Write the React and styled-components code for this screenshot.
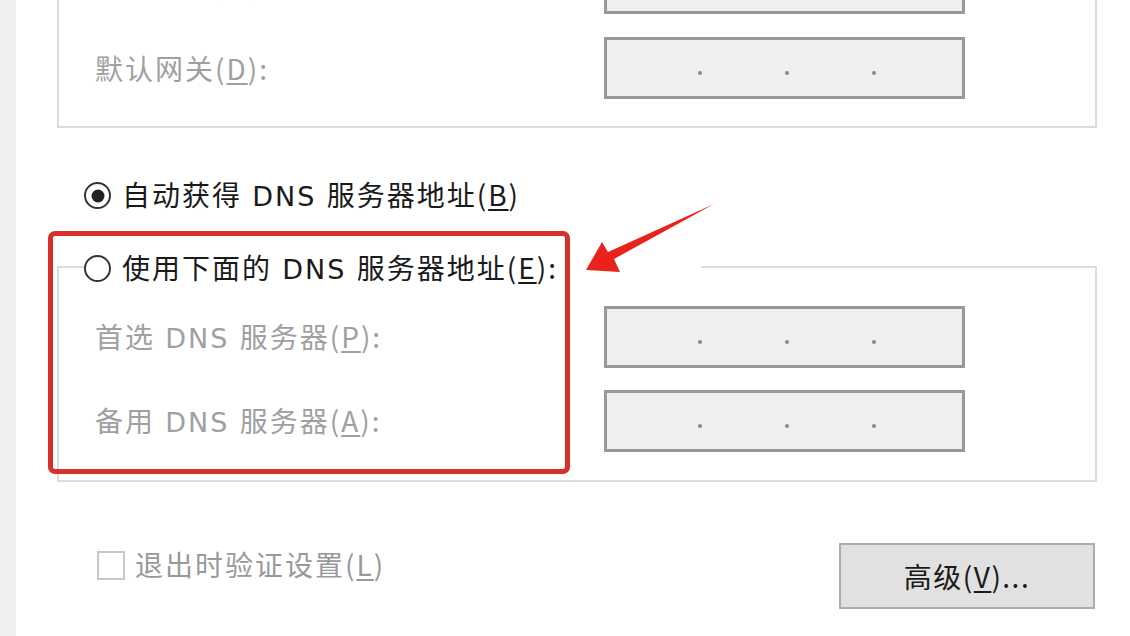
import React from 'react';
import styled, { createGlobalStyle } from 'styled-components';

const GlobalStyle = createGlobalStyle`
    html, body {
        margin: 0;
        padding: 0;
        background: #ffffff;
        overflow: hidden;
    }
    body {
        font-family: "Noto Sans CJK SC", "Noto Sans", sans-serif;
        font-size: 28px;
        letter-spacing: 2px;
        word-spacing: 2px;
    }
`;

const Page = styled.div`
    position: relative;
    display: flex;
    width: 1130px;
    height: 636px;
    overflow: hidden;
    background: #ffffff;
`;

const SideStrip = styled.div`
    width: 16px;
    flex-shrink: 0;
    background: #f0f0f0;
`;

const Main = styled.div`
    display: flex;
    flex-direction: column;
    width: 1040px;
    padding-left: 41px;
`;

const TopGroup = styled.div`
    margin-top: -48px;
    border: 2px solid #dcdcdc;
    border-top: none;
    padding: 0 0 27px 36px;
    display: flex;
    flex-direction: column;
    gap: 23px;
`;

const Row = styled.div`
    display: grid;
    grid-template-columns: 509px 361px;
    align-items: center;
`;

const Label = styled.span`
    color: #a0a0a0;
    white-space: nowrap;
    line-height: 36px;
`;

const Latin = styled.span`
    font-family: "DejaVu Sans", "Noto Sans", sans-serif;
    font-size: 27px;
`;

const Key = styled.u`
    text-decoration-thickness: 2px;
    text-underline-offset: 3px;
`;

const IpBox = styled.div`
    box-sizing: border-box;
    height: 62px;
    border: 3px solid #999999;
    background: #efefef;
    display: flex;
    align-items: center;
    padding: 10px 0 0 91px;
    gap: 83px;
`;

const Dot = styled.span`
    width: 4px;
    height: 4px;
    border-radius: 50%;
    background: #8a8a8a;
`;

const RadioRow = styled.label`
    display: flex;
    align-items: center;
    gap: 11px;
    height: 36px;
    margin: ${(p) => p.$margin || '0'};
    color: #1a1a1a;
    white-space: nowrap;
`;

const RadioCircle = styled.span`
    position: relative;
    box-sizing: border-box;
    width: 27px;
    height: 27px;
    margin-top: 3px;
    border-radius: 50%;
    border: 2px solid #333333;
    background: #ffffff;
    flex-shrink: 0;

    &::after {
        content: '';
        display: ${(p) => (p.$checked ? 'block' : 'none')};
        position: absolute;
        left: 50%;
        top: 50%;
        width: 13px;
        height: 13px;
        border-radius: 50%;
        background: #222222;
        transform: translate(-50%, -50%);
    }
`;

const DnsGroup = styled.fieldset`
    margin: 37px 0 0 0;
    padding: 21px 0 28px 36px;
    border: 2px solid #dcdcdc;
    display: flex;
    flex-direction: column;
    gap: 22px;
    min-width: 0;
`;

const Legend = styled.legend`
    margin-left: -11px;
    padding: 0 143px 0 0;
    background: #ffffff;
`;

const BottomBar = styled.div`
    display: flex;
    justify-content: space-between;
    align-items: flex-start;
    margin-top: 61px;
`;

const CheckRow = styled.label`
    display: flex;
    align-items: center;
    gap: 10px;
    margin: 1px 0 0 40px;
    color: #999999;
`;

const CheckBox = styled.span`
    box-sizing: border-box;
    width: 28px;
    height: 29px;
    margin-top: 2px;
    border: 2px solid #c8c8c8;
    background: #ffffff;
`;

const Button = styled.button`
    box-sizing: border-box;
    width: 256px;
    height: 66px;
    margin-right: 2px;
    border: 2px solid #adadad;
    background: #e1e1e1;
    color: #1a1a1a;
    font-family: inherit;
    font-size: 28px;
    letter-spacing: 1.5px;
    padding: 0;
`;

const Highlight = styled.div`
    position: absolute;
    left: 48px;
    top: 231px;
    width: 522px;
    height: 243px;
    box-sizing: border-box;
    border: 5px solid #d8302a;
    border-radius: 7px;
    pointer-events: none;
`;

const ArrowLayer = styled.svg`
    position: absolute;
    left: 0;
    top: 0;
    pointer-events: none;
`;

const IpField = () => (
    <IpBox>
        <Dot />
        <Dot />
        <Dot />
    </IpBox>
);

export default function App() {
    return (
        <>
            <GlobalStyle />
            <Page>
                <SideStrip />
                <Main>
                    <TopGroup>
                        <Row>
                            <Label>
                                子网掩码(<Key>U</Key>):
                            </Label>
                            <IpField />
                        </Row>
                        <Row>
                            <Label>
                                默认网关(<Key>D</Key>):
                            </Label>
                            <IpField />
                        </Row>
                    </TopGroup>

                    <RadioRow $margin="48px 0 0 27px">
                        <RadioCircle $checked />
                        <span>
                            自动获得 <Latin>DNS</Latin> 服务器地址(<Key>B</Key>)
                        </span>
                    </RadioRow>

                    <DnsGroup>
                        <Legend>
                            <RadioRow>
                                <RadioCircle />
                                <span>
                                    使用下面的 <Latin>DNS</Latin> 服务器地址(<Key>E</Key>):
                                </span>
                            </RadioRow>
                        </Legend>
                        <Row>
                            <Label>
                                首选 <Latin>DNS</Latin> 服务器(<Key>P</Key>):
                            </Label>
                            <IpField />
                        </Row>
                        <Row>
                            <Label>
                                备用 <Latin>DNS</Latin> 服务器(<Key>A</Key>):
                            </Label>
                            <IpField />
                        </Row>
                    </DnsGroup>

                    <BottomBar>
                        <CheckRow>
                            <CheckBox />
                            <span>
                                退出时验证设置(<Key>L</Key>)
                            </span>
                        </CheckRow>
                        <Button>
                            高级(<Key>V</Key>)...
                        </Button>
                    </BottomBar>
                </Main>

                <Highlight />
                <ArrowLayer width="1130" height="636" viewBox="0 0 1130 636">
                    <polygon
                        points="586,270 602,242 608,252 714,204 614,259 620,272"
                        fill="#e8231c"
                    />
                </ArrowLayer>
            </Page>
        </>
    );
}
